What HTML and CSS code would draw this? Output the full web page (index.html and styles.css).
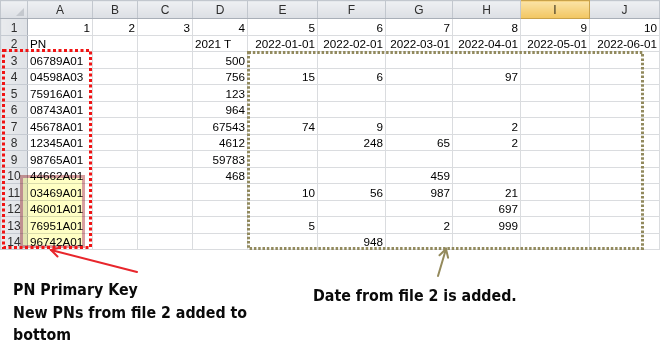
FILE: index.html
```html
<!DOCTYPE html>
<html>
<head>
<meta charset="utf-8">
<link rel="stylesheet" href="styles.css">
</head>
<body>
<div class="page">
  <table class="sheet">
    <colgroup>
      <col class="c-rh"><col class="c-a"><col class="c-b"><col class="c-c"><col class="c-d">
      <col class="c-e"><col class="c-f"><col class="c-g"><col class="c-h"><col class="c-i"><col class="c-j">
    </colgroup>
    <thead>
      <tr><th class="corner"></th><th>A</th><th>B</th><th>C</th><th>D</th><th>E</th><th>F</th><th>G</th><th>H</th><th class="sel">I</th><th>J</th></tr>
    </thead>
    <tbody>
      <tr><th>1</th><td class="n">1</td><td class="n">2</td><td class="n">3</td><td class="n">4</td><td class="n">5</td><td class="n">6</td><td class="n">7</td><td class="n">8</td><td class="n">9</td><td class="n">10</td></tr>
      <tr><th>2</th><td>PN</td><td></td><td></td><td>2021 T</td><td class="n">2022-01-01</td><td class="n">2022-02-01</td><td class="n">2022-03-01</td><td class="n">2022-04-01</td><td class="n">2022-05-01</td><td class="n">2022-06-01</td></tr>
      <tr><th>3</th><td>06789A01</td><td></td><td></td><td class="n">500</td><td></td><td></td><td></td><td></td><td></td><td></td></tr>
      <tr><th>4</th><td>04598A03</td><td></td><td></td><td class="n">756</td><td class="n">15</td><td class="n">6</td><td></td><td class="n">97</td><td></td><td></td></tr>
      <tr><th>5</th><td>75916A01</td><td></td><td></td><td class="n">123</td><td></td><td></td><td></td><td></td><td></td><td></td></tr>
      <tr><th>6</th><td>08743A01</td><td></td><td></td><td class="n">964</td><td></td><td></td><td></td><td></td><td></td><td></td></tr>
      <tr><th>7</th><td>45678A01</td><td></td><td></td><td class="n">67543</td><td class="n">74</td><td class="n">9</td><td></td><td class="n">2</td><td></td><td></td></tr>
      <tr><th>8</th><td>12345A01</td><td></td><td></td><td class="n">4612</td><td></td><td class="n">248</td><td class="n">65</td><td class="n">2</td><td></td><td></td></tr>
      <tr><th>9</th><td>98765A01</td><td></td><td></td><td class="n">59783</td><td></td><td></td><td></td><td></td><td></td><td></td></tr>
      <tr><th>10</th><td>44662A01</td><td></td><td></td><td class="n">468</td><td></td><td></td><td class="n">459</td><td></td><td></td><td></td></tr>
      <tr><th>11</th><td>03469A01</td><td></td><td></td><td></td><td class="n">10</td><td class="n">56</td><td class="n">987</td><td class="n">21</td><td></td><td></td></tr>
      <tr><th>12</th><td>46001A01</td><td></td><td></td><td></td><td></td><td></td><td></td><td class="n">697</td><td></td><td></td></tr>
      <tr><th>13</th><td>76951A01</td><td></td><td></td><td></td><td class="n">5</td><td></td><td class="n">2</td><td class="n">999</td><td></td><td></td></tr>
      <tr><th>14</th><td>96742A01</td><td></td><td></td><td></td><td></td><td class="n">948</td><td></td><td></td><td></td><td></td></tr>
    </tbody>
  </table>

  <div class="notes">
    <p class="note note-left">PN Primary Key<br>New PNs from file 2 added to<br>bottom</p>
    <p class="note note-right">Date from file 2 is added.</p>
  </div>

  <div class="newpn-box"></div>

  <svg class="marks" width="662" height="350" viewBox="0 0 662 350">
    <rect x="3.5" y="50.5" width="87" height="197" fill="none" stroke="#f01414" stroke-width="3" stroke-dasharray="3 2.5"/>
    <rect x="248.5" y="52.5" width="394" height="196" fill="none" stroke="#928a5e" stroke-width="3" stroke-dasharray="2.5 1.8"/>
    <g stroke="#e8262c" stroke-width="2" fill="none" stroke-linecap="round">
      <line x1="137" y1="272" x2="51" y2="250"/>
      <polyline points="57.5,256.5 51,250 59.7,247.6"/>
    </g>
    <g stroke="#948a5c" stroke-width="2" fill="none" stroke-linecap="round">
      <line x1="438" y1="276" x2="446" y2="249"/>
      <polyline points="439.5,255.2 446,249 448.1,257.7"/>
    </g>
  </svg>
</div>
</body>
</html>
```

FILE: styles.css
```css
html, body {
  margin: 0;
  background: #ffffff;
}

.page {
  position: relative;
  width: 662px;
  height: 350px;
  overflow: hidden;
}

.sheet {
  border-collapse: collapse;
  table-layout: fixed;
  width: 659px;
  font-family: "Liberation Sans", Arial, sans-serif;
  font-size: 11.7px;
  color: #000000;
}

.c-rh { width: 27px; }
.c-a { width: 65px; }
.c-b { width: 45px; }
.c-c { width: 55px; }
.c-d { width: 55px; }
.c-e { width: 70px; }
.c-f { width: 68px; }
.c-g { width: 67px; }
.c-h { width: 68px; }
.c-i { width: 69px; }
.c-j { width: 70px; }

.sheet thead th {
  height: 17px;
  padding: 0;
  background: linear-gradient(#eef0f3, #dcdfe4);
  border: 1px solid #c2c7ce;
  border-bottom-color: #a9afb8;
  font-weight: normal;
  color: #2e2e2e;
  text-align: center;
  vertical-align: middle;
  font-size: 12px;
}

.sheet thead th.sel {
  background: linear-gradient(#fbe3a6, #f2c661);
  border-color: #c9a24a;
  color: #3a3320;
}

.sheet thead th.corner {
  position: relative;
}

.sheet thead th.corner::after {
  content: "";
  position: absolute;
  right: 3px;
  bottom: 2px;
  border-style: solid;
  border-width: 0 0 8px 8px;
  border-color: transparent transparent #c4c8ce transparent;
}

.sheet tbody tr {
  height: 16.5px;
}

.sheet tbody th {
  padding: 0;
  background: linear-gradient(90deg, #e9ebee, #dfe2e6);
  border: 1px solid #c6cbd2;
  border-right-color: #a9afb8;
  font-weight: normal;
  color: #2e2e2e;
  text-align: center;
  vertical-align: bottom;
  line-height: 14px;
  font-size: 12px;
}

.sheet td {
  padding: 0 2px;
  border: 1px solid #dadcdf;
  vertical-align: bottom;
  line-height: 14px;
  white-space: nowrap;
  overflow: hidden;
}

.sheet td.n {
  text-align: right;
}

.notes {
  display: flex;
  align-items: flex-start;
  padding: 29px 0 0 13px;
}

.note {
  margin: 0;
  font-family: "DejaVu Sans Condensed", "DejaVu Sans", sans-serif;
  font-stretch: condensed;
  font-weight: bold;
  font-size: 15.8px;
  line-height: 22.5px;
  color: #0a0a0a;
}

.note-left {
  flex: 0 0 300px;
}

.note-right {
  padding-top: 6px;
}

.newpn-box {
  position: absolute;
  left: 20px;
  top: 175px;
  width: 59px;
  height: 67px;
  border: 3px solid #d9a0a0;
  background: #ffffc4;
  mix-blend-mode: multiply;
}

.marks {
  position: absolute;
  left: 0;
  top: 0;
  pointer-events: none;
}
```
